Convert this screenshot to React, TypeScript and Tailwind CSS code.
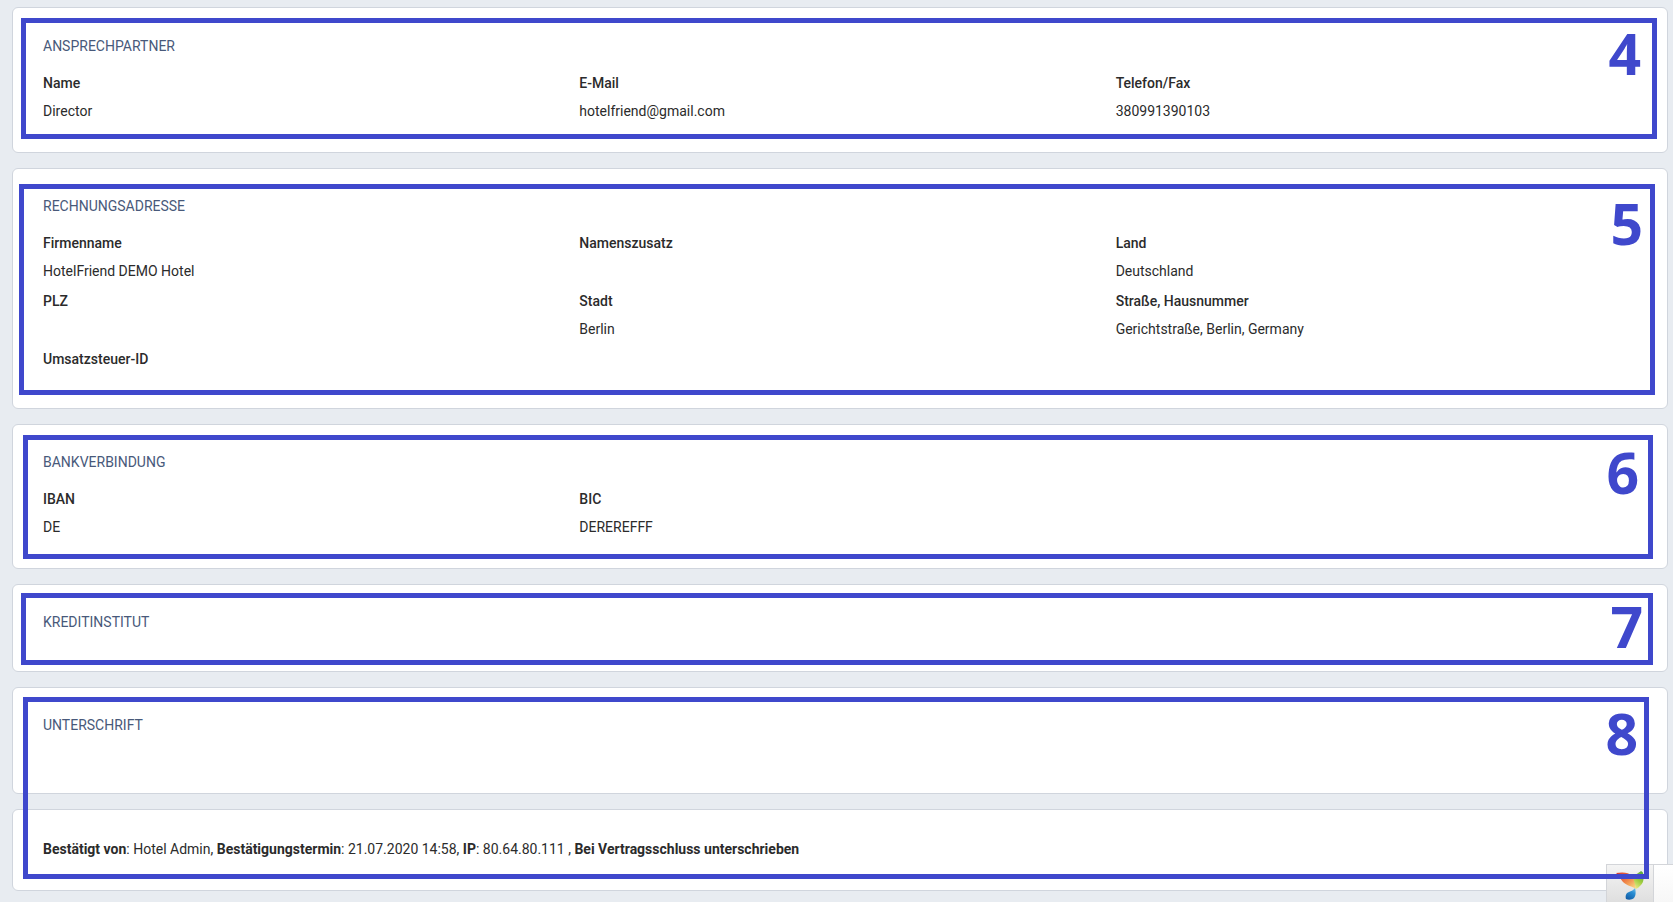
import React from 'react';
import { clsx } from 'clsx';

type Field = { label: string; value?: string };

const contact: Field[] = [
  { label: 'Name', value: 'Director' },
  { label: 'E-Mail', value: 'hotelfriend@gmail.com' },
  { label: 'Telefon/Fax', value: '380991390103' },
];

const billing: Field[] = [
  { label: 'Firmenname', value: 'HotelFriend DEMO Hotel' },
  { label: 'Namenszusatz' },
  { label: 'Land', value: 'Deutschland' },
  { label: 'PLZ' },
  { label: 'Stadt', value: 'Berlin' },
  { label: 'Straße, Hausnummer', value: 'Gerichtstraße, Berlin, Germany' },
  { label: 'Umsatzsteuer-ID' },
];

const bank: Field[] = [
  { label: 'IBAN', value: 'DE' },
  { label: 'BIC', value: 'DEREREFFF' },
];

const Fields: React.FC<{ items: Field[] }> = ({ items }) => (
  <dl className="grid grid-cols-3">
    {items.map((item) => (
      <div key={item.label} className="pb-[10px]">
        <dt className="mb-2 font-medium">{item.label}</dt>
        <dd>{item.value}</dd>
      </div>
    ))}
  </dl>
);

const Card: React.FC<{
  title?: string;
  className?: string;
  children?: React.ReactNode;
}> = ({ title, className = 'pt-[27px] pb-[21px]', children }) => (
  <section
    className={clsx(
      'relative rounded-md border border-[#d0d5dd] bg-white pl-[30px] pr-[15px]',
      className
    )}
  >
    {title && <h2 className="mb-[17px] text-[#48597a] uppercase">{title}</h2>}
    {children}
  </section>
);

// numbered frame laid over a card
const Marker: React.FC<{ number: number; frame: string; digit: string }> = ({
  number,
  frame,
  digit,
}) => (
  <div className={clsx('pointer-events-none absolute z-10 border-[5px] border-[#3f48cc]', frame)}>
    <span
      className={clsx(
        "absolute font-['Open_Sans',sans-serif] text-[57px] leading-none font-bold text-[#3f48cc]",
        digit
      )}
    >
      {number}
    </span>
  </div>
);

const DebugToolbar: React.FC = () => (
  <div className="fixed right-0 bottom-0 z-5 flex h-[38px] w-[67px] border-t border-l border-[#d3d5d9] bg-gradient-to-b from-white to-[#f7f7f7]">
    <a
      href="#debug"
      aria-label="Debugger"
      className="block w-[47px] border-r border-[#d3d5d9] bg-gradient-to-b from-[#f4f4f4] to-[#dfdfdf] pt-[6px] pl-[9px]"
    >
      <svg width="28" height="29" viewBox="0 0 28 29" aria-hidden="true">
        <defs>
          <linearGradient id="orange" x1="0" y1="0" x2="1" y2="1">
            <stop offset="0" stopColor="#d5302a" />
            <stop offset="0.55" stopColor="#f08a4b" />
            <stop offset="1" stopColor="#fce58a" />
          </linearGradient>
          <linearGradient id="green" x1="0.6" y1="0" x2="0.2" y2="1">
            <stop offset="0" stopColor="#5fae3c" />
            <stop offset="0.5" stopColor="#a0cd3f" />
            <stop offset="1" stopColor="#f0ec8c" />
          </linearGradient>
          <linearGradient id="blue" x1="0.8" y1="0" x2="0.3" y2="1">
            <stop offset="0" stopColor="#6dbbe8" />
            <stop offset="0.35" stopColor="#2a8fd4" />
            <stop offset="1" stopColor="#145fa8" />
          </linearGradient>
        </defs>
        <path d="M0 2c6-1 13-1 16 3 3 4 4 8 4 13-4-3-9-3-13-7C4 8 3 4 0 2Z" fill="url(#orange)" />
        <path d="M25 0c1 1 2 1 2 2 1 4 1 9-2 12-2 2-3 3-5 4 0-4-3-8-2-12 1-3 5-4 7-6Z" fill="url(#green)" />
        <path d="M19 17c1 3 1 8-1 10-2 2-6 2-8 1-1-3 0-6 3-7 2-1 5-2 6-4Z" fill="url(#blue)" />
      </svg>
    </a>
  </div>
);

export default function App() {
  return (
    <main className="flex min-h-screen flex-col gap-[15px] bg-[#e8ecf1] pt-[7px] pr-[5px] pb-[11px] pl-3 font-[Roboto,sans-serif] text-[14px] leading-5 text-[#2b2b2b]">
      <Card title="Ansprechpartner" className="pt-7 pb-[21px]">
        <Fields items={contact} />
        <Marker number={4} frame="top-[10px] right-[10px] bottom-[13px] left-2" digit="top-[2px] right-[11px]" />
      </Card>

      <Card title="Rechnungsadresse">
        <Fields items={billing} />
        <Marker number={5} frame="top-[15px] right-3 bottom-[13px] left-[6px]" digit="top-[6px] right-[7px]" />
      </Card>

      <Card title="Bankverbindung">
        <Fields items={bank} />
        <Marker number={6} frame="top-[10px] right-[14px] bottom-[9px] left-[10px]" digit="top-1 right-[9px]" />
      </Card>

      <Card title="Kreditinstitut" className="pt-[27px] pb-[22px]">
        <Marker number={7} frame="top-2 right-[14px] bottom-[6px] left-2" digit="top-0 right-[5px]" />
      </Card>

      <Card title="Unterschrift" className="pt-[27px] pb-[41px]">
        {/* spans this card and the confirmation below */}
        <Marker number={8} frame="top-[9px] right-[18px] -bottom-[86px] left-[10px]" digit="top-[3px] right-[6px]" />
      </Card>

      <Card className="pt-[29px] pb-[31px]">
        <p>
          <b className="font-bold">Bestätigt von</b>: Hotel Admin,{' '}
          <b className="font-bold">Bestätigungstermin</b>: 21.07.2020 14:58,{' '}
          <b className="font-bold">IP</b>: 80.64.80.111 ,{' '}
          <b className="font-bold">Bei Vertragsschluss unterschrieben</b>
        </p>
      </Card>

      <DebugToolbar />
    </main>
  );
}
